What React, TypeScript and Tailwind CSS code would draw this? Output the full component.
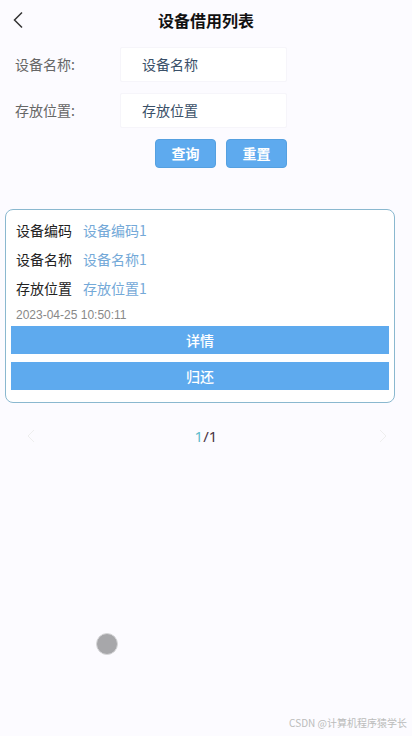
import React from 'react'

const cjk = { fontFamily: '"Noto Sans CJK SC", "Noto Sans", sans-serif' }

const FormRow = ({ label, value }: { label: string; value: string }) => (
  <div className="flex items-center h-[35px]">
    <span className="w-[120px] pl-[15px] text-[14px] text-[#666]">{label}</span>
    <div className="w-[167px] h-full flex items-center pl-[21px] bg-white border border-[#f6f5fa] rounded-[2px] text-[14px] text-[#3a5068]">
      {value}
    </div>
  </div>
)

const InfoRow = ({ label, value }: { label: string; value: string }) => (
  <div className="flex items-center h-[29px] pl-[5px] text-[14px]">
    <span className="w-[67px] text-[#222]">{label}</span>
    <span className="text-[#74a9d8]">{value}</span>
  </div>
)

export default function App() {
  return (
    <div className="relative w-[412px] h-[736px] bg-[#fcfbff] overflow-hidden" style={cjk}>
      <div className="relative flex items-center justify-center h-10">
        <svg className="absolute left-[12px] top-[11px]" width="14" height="18" viewBox="0 0 14 18">
          <path d="M10 1.5 L2.5 9 L10 16.5" fill="none" stroke="#333" strokeWidth="1.5" />
        </svg>
        <span className="text-[16px] font-bold text-[#111]">设备借用列表</span>
      </div>

      <div className="mt-[7px] flex flex-col gap-[11px]">
        <FormRow label="设备名称:" value="设备名称" />
        <FormRow label="存放位置:" value="存放位置" />
      </div>

      <div className="mt-[11px] flex justify-center gap-[10px] pl-[30px]">
        <button className="w-[61px] h-[29px] rounded-[4px] bg-[#5eaaee] border border-[#55a0e0] text-white text-[14px] font-bold">
          查询
        </button>
        <button className="w-[61px] h-[29px] rounded-[4px] bg-[#5eaaee] border border-[#55a0e0] text-white text-[14px] font-bold">
          重置
        </button>
      </div>

      <div className="mx-[5px] mt-[41px] w-[390px] border border-[#8ab8cf] rounded-[8px] bg-white px-[5px] pt-[6px] pb-[12px]">
        <InfoRow label="设备编码" value="设备编码1" />
        <InfoRow label="设备名称" value="设备名称1" />
        <InfoRow label="存放位置" value="存放位置1" />
        <div
          className="h-[23px] pl-[5px] flex items-center text-[12px] text-[#888]"
          style={{ fontFamily: '"Liberation Sans", Arial, sans-serif' }}
        >
          2023-04-25 10:50:11
        </div>
        <div className="flex flex-col gap-[8px]">
          <button className="h-[28px] w-full bg-[#5eaaee] text-white text-[14px] font-medium">详情</button>
          <button className="h-[28px] w-full bg-[#5eaaee] text-white text-[14px] font-medium">归还</button>
        </div>
      </div>

      <div className="relative mt-[17px] h-[32px] flex items-center justify-center">
        <svg className="absolute left-[26px] top-[9px]" width="10" height="14" viewBox="0 0 10 14">
          <path d="M8 1 L2 7 L8 13" fill="none" stroke="#eee" strokeWidth="1" />
        </svg>
        <span className="text-[15px]" style={{ fontFamily: '"Noto Sans", sans-serif' }}>
          <span className="text-[#5bbccb]">1</span>
          <span className="text-[#4a3542]">/1</span>
        </span>
        <svg className="absolute left-[378px] top-[9px]" width="10" height="14" viewBox="0 0 10 14">
          <path d="M2 1 L8 7 L2 13" fill="none" stroke="#eee" strokeWidth="1" />
        </svg>
      </div>

      <div className="absolute left-[96px] top-[633px] w-[22px] h-[22px] rounded-full bg-[#a7a7aa] border border-[#d6d6d8]" />

      <div className="absolute right-[5px] bottom-[6px] text-[10px] text-[#bbb]">CSDN @计算机程序猿学长</div>
    </div>
  )
}
